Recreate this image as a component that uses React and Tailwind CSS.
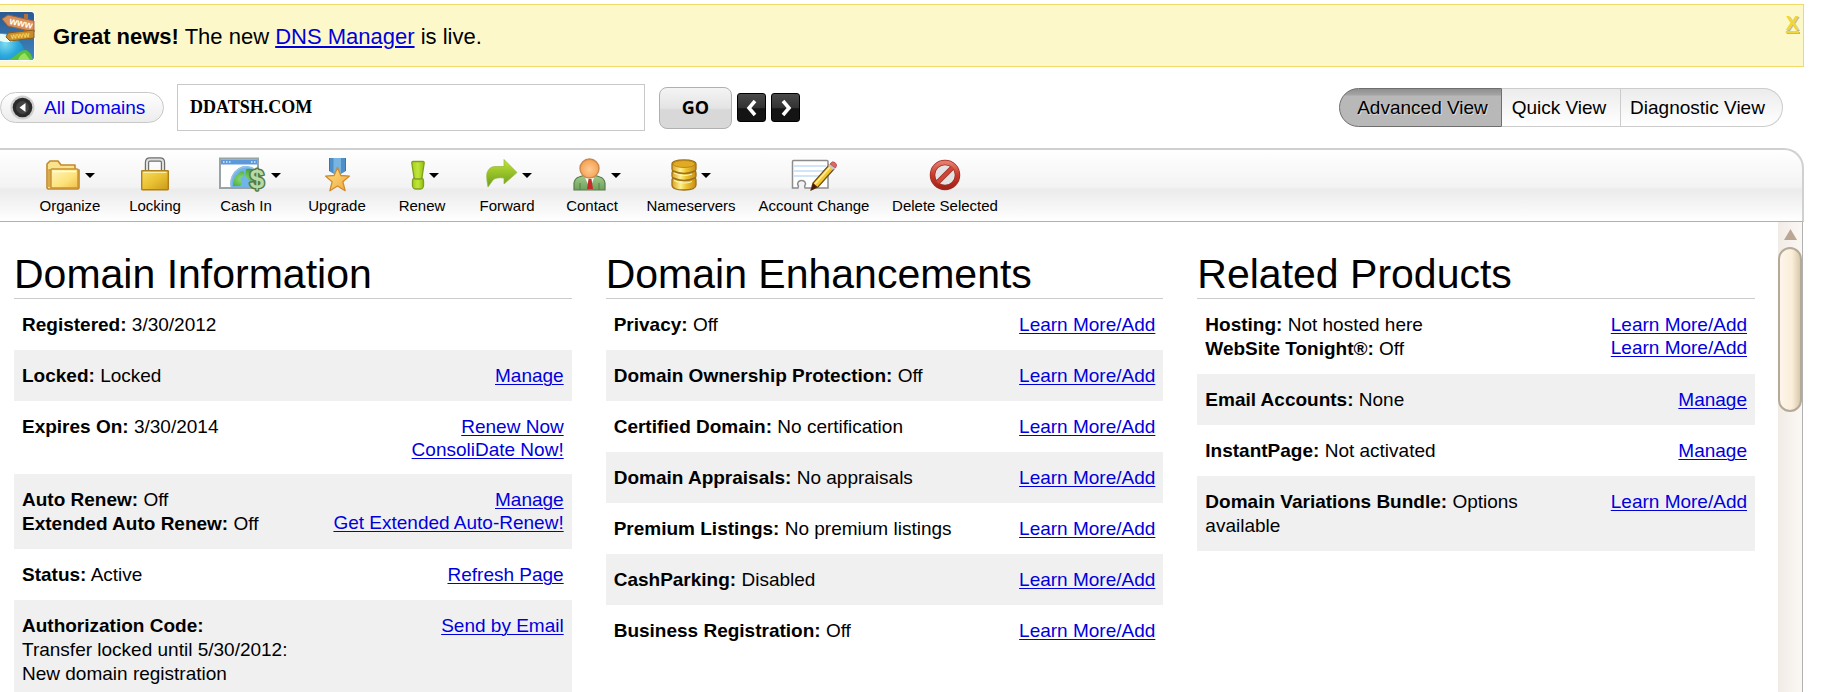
import React from "react";

const LINK = "text-[#0000dd] underline decoration-1 underline-offset-2";

function SignpostIcon() {
  return (
    <svg className="h-[50px] w-[35px] shrink-0" viewBox="0 0 35 50" aria-hidden="true">
      <defs>
        <linearGradient id="sky" x1="0" y1="0" x2="0" y2="1">
          <stop offset="0" stopColor="#2a5a93" />
          <stop offset="1" stopColor="#3f86bd" />
        </linearGradient>
        <radialGradient id="sea" cx="0.2" cy="0.4" r="0.9">
          <stop offset="0" stopColor="#7fdcf0" />
          <stop offset="0.5" stopColor="#2ba9dd" />
          <stop offset="1" stopColor="#1b7fc4" />
        </radialGradient>
        <clipPath id="tile">
          <path d="M-4 0H31q4 0 4 4V46q0 4-4 4H-4z" />
        </clipPath>
      </defs>
      <g clipPath="url(#tile)">
        <rect width="35" height="50" fill="#fff" />
        <path d="M0 1H31q3 0 3 3V46q0 3-3 3H0z" fill="url(#sky)" />
        <path d="M0 22q14 0 22 12 5 8 5 15H0z" fill="url(#sea)" />
        <path d="M0 23q9-1 16 6-7 4-16 1z" fill="#e6fbf3" />
        <path d="M7 49q5-1 9-5 5-5 10-5 5 2 7 10z" fill="#57bf3c" />
        <path d="M18 49q2-6 7-7l5 7z" fill="#9be05a" />
        <path d="M24 3h4v25h-4z" fill="#b06f3c" />
        <path d="M2 8L8 4 34 10V21L8 15z" fill="#d9925d" stroke="#a8643a" strokeWidth="1" />
        <path d="M34 19L8 22 6 26l4 4 24-3z" fill="#c98c2b" stroke="#8a5a1c" strokeWidth="1" />
        <text x="9" y="13" transform="rotate(12 9 13)" fontSize="10" fontWeight="700" fontFamily="Liberation Sans, sans-serif" fill="#fff">www</text>
        <text x="11" y="28" transform="rotate(-6 11 28)" fontSize="8" fontWeight="700" fontFamily="Liberation Sans, sans-serif" fill="#f0d660">www</text>
      </g>
    </svg>
  );
}

function FolderIcon() {
  return (
    <svg className="h-9 w-9" viewBox="0 0 36 36">
      <defs>
        <linearGradient id="folder" x1="0" y1="0" x2="1" y2="1">
          <stop offset="0" stopColor="#fff6bd" />
          <stop offset="0.6" stopColor="#fde27a" />
          <stop offset="1" stopColor="#f0bd4a" />
        </linearGradient>
      </defs>
      <path d="M2 31V7l3-3h8l3 4h14v5h4v18l-1 1H3z" fill="#fbe28c" stroke="#c08a2e" strokeWidth="1.6" strokeLinejoin="round" />
      <path d="M4 30V13h28" fill="none" stroke="#c9952f" strokeWidth="1.4" />
      <path d="M5 31V13H8L6 31z" fill="#e5b04a" />
      <rect x="6" y="12" width="27" height="19" rx="1" fill="url(#folder)" stroke="#c9902f" strokeWidth="1.4" />
      <path d="M8 14.5h23" stroke="#fffbe0" strokeWidth="1.4" />
    </svg>
  );
}

function LockIcon() {
  return (
    <svg className="h-9 w-[30px]" viewBox="0 0 30 36">
      <defs>
        <linearGradient id="lock" x1="0" y1="0" x2="1" y2="1">
          <stop offset="0" stopColor="#f6dc62" />
          <stop offset="0.5" stopColor="#eac233" />
          <stop offset="1" stopColor="#c99a1c" />
        </linearGradient>
      </defs>
      <path d="M7 15V5.500q0-3 3-3H20q3 0 3 3V15" fill="none" stroke="#6e6e6e" strokeWidth="4.400" />
      <path d="M7 15V5.500q0-3 3-3H20q3 0 3 3V15" fill="none" stroke="#dedede" strokeWidth="2" />
      <rect x="1.700" y="13.700" width="26.600" height="19" rx="0.600" fill="url(#lock)" stroke="#b07f1a" strokeWidth="1.400" />
      <path d="M3.500 15.400h23" stroke="#fbf0a4" strokeWidth="1.200" />
    </svg>
  );
}

function CashIcon() {
  return (
    <svg className="h-9 w-14" viewBox="-8 0 56 36">
      <defs>
        <radialGradient id="globe" cx="0.4" cy="0.6" r="0.7">
          <stop offset="0" stopColor="#8fe06a" />
          <stop offset="1" stopColor="#3c9a36" />
        </radialGradient>
      </defs>
      <rect x="1" y="1.500" width="38" height="29.500" fill="#fff" stroke="#98a4a6" strokeWidth="2" />
      <rect x="2" y="2.500" width="36" height="5" fill="#5b98dc" />
      <path d="M4 5h1.500M7 5h1.500M10 5h1.500M32 5h1.500M35 5h1.500" stroke="#dcecff" strokeWidth="1.500" />
      <path d="M12 30a15.500 17 0 0 1 26-16V30z" fill="#6fb4ea" />
      <path d="M14 29q0-8 5-12 2-3 5-3l2 3-5 5 2 4-2 3zM27 12q6-1 10 2v7l-6 3-5-5z" fill="url(#globe)" />
      <path d="M12 29.500a15.500 17 0 0 1 25-16" fill="none" stroke="#9bbfe0" strokeWidth="1.500" />
      <text x="38" y="31" textAnchor="middle" fontFamily="Liberation Sans, sans-serif" fontSize="26" fontWeight="700" fill="#b9dba0" stroke="#56794a" strokeWidth="3" paintOrder="stroke" strokeLinejoin="round">$</text>
    </svg>
  );
}

function MedalIcon() {
  return (
    <svg className="h-9 w-[28px]" viewBox="0 0 28 36">
      <defs>
        <linearGradient id="star" x1="0" y1="0" x2="1" y2="1">
          <stop offset="0" stopColor="#fde58a" />
          <stop offset="1" stopColor="#f0a63a" />
        </linearGradient>
      </defs>
      <path d="M6 1H23V14l-8.500 5L6 14z" fill="#4e8fc8" />
      <path d="M10.500 1h7.500v16h-7.500z" fill="#78b4e2" />
      <path d="M6.500 1V14M22.500 1V14" stroke="#3c74a8" />
      <path d="M14.500 10.500l3.400 8 8.600.6-6.600 5.700 2.200 8.900-7.600-4.700L6.900 33.700l2.200-8.900-6.600-5.700 8.600-.6z" fill="url(#star)" stroke="#cf8a2c" strokeWidth="1.300" strokeLinejoin="round" />
    </svg>
  );
}

function ExclaimIcon() {
  return (
    <svg className="h-9 w-[20px]" viewBox="-6 0 20 36">
      <defs>
        <linearGradient id="excl" x1="0" y1="0" x2="1" y2="0">
          <stop offset="0" stopColor="#a5cf1c" />
          <stop offset="0.5" stopColor="#c0e63a" />
          <stop offset="1" stopColor="#8fbd10" />
        </linearGradient>
      </defs>
      <rect x="1.500" y="20.500" width="11" height="11.500" rx="3.500" fill="url(#excl)" stroke="#7f9f1c" strokeWidth="1.300" />
      <path d="M2 4.500h10q1.300 0 1.200 1.500L11 20.500q-.3 1.500-1.500 1.500h-5Q3.300 22 3 20.500L.8 6Q.7 4.500 2 4.500z" fill="url(#excl)" stroke="#7f9f1c" strokeWidth="1.300" />
    </svg>
  );
}

function ForwardIcon() {
  return (
    <svg className="h-9 w-9" viewBox="-4 0 36 36">
      <defs>
        <linearGradient id="fwd" x1="0" y1="0" x2="0" y2="1">
          <stop offset="0" stopColor="#c0e436" />
          <stop offset="1" stopColor="#6c9d1c" />
        </linearGradient>
      </defs>
      <path d="M18 2.500L31 15.500 18 27v-6q-8-1-11 2l-5 7Q0 20 1 16q2-6.500 8-6.500h9z" fill="url(#fwd)" stroke="#92b83c" strokeWidth="0.700" />
    </svg>
  );
}

function ContactIcon() {
  return (
    <svg className="h-9 w-[44px]" viewBox="-10 0 44 36">
      <defs>
        <radialGradient id="face" cx="0.5" cy="0.55" r="0.6">
          <stop offset="0" stopColor="#ffcb94" />
          <stop offset="1" stopColor="#f39a48" />
        </radialGradient>
        <linearGradient id="suit" x1="0" y1="0" x2="0" y2="1">
          <stop offset="0" stopColor="#a4cb8c" />
          <stop offset="1" stopColor="#6fa05c" />
        </linearGradient>
      </defs>
      <path d="M1 33V26q1-5 5-6l6-2h9l6 2q4 1 5 6v7z" fill="url(#suit)" stroke="#587d49" strokeWidth="1.200" />
      <path d="M11 18l6 14 5-14z" fill="#fff" />
      <path d="M15.500 22h3l1.500 10h-6z" fill="#c62c2c" />
      <path d="M7 26v7M26 26v7" stroke="#587d49" />
      <circle cx="16.500" cy="11.500" r="9.500" fill="url(#face)" stroke="#c88850" strokeWidth="1.400" />
    </svg>
  );
}

function DatabaseIcon() {
  return (
    <svg className="h-9 w-[26px]" viewBox="0 0 26 36">
      <defs>
        <linearGradient id="db" x1="0" y1="0" x2="1" y2="0">
          <stop offset="0" stopColor="#dca21a" />
          <stop offset="0.35" stopColor="#fdf08e" />
          <stop offset="0.6" stopColor="#ecc233" />
          <stop offset="1" stopColor="#c98f12" />
        </linearGradient>
      </defs>
      <path d="M1 7q0-4 12-4t12 4v5q0 1-1 2 1 .8 1 2v3q0 1-1 2 1 .8 1 2v5q0 5-12 5T1 28v-5q0-1.200 1-2-1-1-1-2v-3q0-1.200 1-2-1-1-1-2z" fill="url(#db)" stroke="#9c701c" strokeWidth="1.300" />
      <ellipse cx="13" cy="7" rx="11" ry="3.500" fill="#e2aa20" stroke="#b07d18" strokeWidth="0.800" />
      <path d="M2 14q11 5 22 0M2 21q11 5 22 0" fill="none" stroke="#9c701c" strokeWidth="1.600" />
      <path d="M3 16q10 4.500 18 1M3 23.500q10 4.500 18 1" fill="none" stroke="#fff7b8" strokeWidth="1" />
    </svg>
  );
}

function AccountIcon() {
  return (
    <svg className="h-9 w-[46px]" viewBox="0 0 46 36">
      <path d="M1.500 4.500q0-1 1-1H36q1 0 1 1V31H14q-1-2 .6-4-.6-3.500-4-3.500t-4 3.500q1.400 2 .4 4H1.500z" fill="#fff" stroke="#8d8d8d" strokeWidth="1.500" />
      <path d="M3 9h32M3 14h32M3 19h28" stroke="#c3dcf5" strokeWidth="1.400" />
      <path d="M20 33l2-7L38 8l5 4-16 18z" fill="#f2c62c" stroke="#6d4a14" strokeWidth="1.200" />
      <path d="M24 27L39.500 9.500" stroke="#fdf0a0" strokeWidth="1.500" />
      <path d="M20 33.500l2-7.500 4.500 4z" fill="#4a1c10" />
      <path d="M37 9l2.500-3 5 4L42 13z" fill="#c9c9c9" />
      <path d="M39 7q2-3.500 5-1.500t.5 5.500z" fill="#dc6868" stroke="#b54c4c" strokeWidth="0.800" />
    </svg>
  );
}

function ForbiddenIcon() {
  return (
    <svg className="h-9 w-8" viewBox="0 0 32 36">
      <defs>
        <linearGradient id="ban" x1="0" y1="0" x2="0" y2="1">
          <stop offset="0" stopColor="#e57a6c" />
          <stop offset="0.5" stopColor="#c93a2c" />
          <stop offset="1" stopColor="#a32418" />
        </linearGradient>
      </defs>
      <circle cx="16" cy="18" r="12" fill="#e3e3e3" />
      <path d="M8 26L24 10" stroke="#9c2f25" strokeWidth="5" />
      <circle cx="16" cy="18" r="12.500" fill="none" stroke="#9c2f25" strokeWidth="5.500" />
      <circle cx="16" cy="18" r="12.500" fill="none" stroke="url(#ban)" strokeWidth="4" />
      <path d="M8.500 25.500l15-15" stroke="#cf4537" strokeWidth="3.500" />
    </svg>
  );
}

const TOOLS = [
  { label: "Organize", Icon: FolderIcon, menu: true, width: "w-[60px]" },
  { label: "Locking", Icon: LockIcon, width: "w-[60px]" },
  { label: "Cash In", Icon: CashIcon, menu: true, width: "w-[72px]" },
  { label: "Upgrade", Icon: MedalIcon, width: "w-[60px]" },
  { label: "Renew", Icon: ExclaimIcon, menu: true, width: "w-[60px]" },
  { label: "Forward", Icon: ForwardIcon, menu: true, width: "w-[60px]" },
  { label: "Contact", Icon: ContactIcon, menu: true, width: "w-[60px]" },
  { label: "Nameservers", Icon: DatabaseIcon, menu: true, width: "w-[88px]" },
  { label: "Account Change", Icon: AccountIcon, width: "w-[108px]" },
  { label: "Delete Selected", Icon: ForbiddenIcon, width: "w-[104px]" },
];

const COLUMNS = [
  {
    title: "Domain Information",
    rows: [
      { facts: [["Registered:", "3/30/2012"]], links: [] },
      { facts: [["Locked:", "Locked"]], links: ["Manage"] },
      { facts: [["Expires On:", "3/30/2014"]], links: ["Renew Now", "ConsoliDate Now!"] },
      { facts: [["Auto Renew:", "Off"], ["Extended Auto Renew:", "Off"]], links: ["Manage", "Get Extended Auto-Renew!"] },
      { facts: [["Status:", "Active"]], links: ["Refresh Page"] },
      {
        facts: [["Authorization Code:", ""], ["", "Transfer locked until 5/30/2012:"], ["", "New domain registration"]],
        links: ["Send by Email"],
      },
    ],
  },
  {
    title: "Domain Enhancements",
    rows: [
      { facts: [["Privacy:", "Off"]], links: ["Learn More/Add"] },
      { facts: [["Domain Ownership Protection:", "Off"]], links: ["Learn More/Add"] },
      { facts: [["Certified Domain:", "No certification"]], links: ["Learn More/Add"] },
      { facts: [["Domain Appraisals:", "No appraisals"]], links: ["Learn More/Add"] },
      { facts: [["Premium Listings:", "No premium listings"]], links: ["Learn More/Add"] },
      { facts: [["CashParking:", "Disabled"]], links: ["Learn More/Add"] },
      { facts: [["Business Registration:", "Off"]], links: ["Learn More/Add"] },
    ],
  },
  {
    title: "Related Products",
    rows: [
      {
        facts: [["Hosting:", "Not hosted here"], ["WebSite Tonight®:", "Off"]],
        links: ["Learn More/Add", "Learn More/Add"],
      },
      { facts: [["Email Accounts:", "None"]], links: ["Manage"] },
      { facts: [["InstantPage:", "Not activated"]], links: ["Manage"] },
      { facts: [["Domain Variations Bundle:", "Options available"]], links: ["Learn More/Add"] },
    ],
  },
];

function Banner() {
  return (
    <div className="mt-1 mr-[19px] flex h-[63px] shrink-0 items-center border border-l-0 border-[#f0da6a] bg-[#fdf8ca]">
      <SignpostIcon />
      <p className="ml-[18px] flex-1 pt-[2px] text-[22px] leading-7">
        <b>Great news!</b> The new{" "}
        <a href="#dns" className="text-[#0000dd] underline decoration-2 underline-offset-2">
          DNS Manager
        </a>{" "}
        is live.
      </p>
      <button type="button" aria-label="Close" className="mt-[6px] mr-1 self-start text-[20px] leading-6 font-bold text-[#f0d53c] underline decoration-2 [text-shadow:1px_1px_0_#bdb78a]">
        X
      </button>
    </div>
  );
}

function StepButton({ label, points }) {
  return (
    <button type="button" aria-label={label} className="flex h-[29px] w-[29px] items-center justify-center rounded-[3px] border border-black bg-linear-to-b from-[#4a4a4a] from-0% via-[#333333] via-50% to-[#141414] to-55%">
      <svg className="h-5 w-5" viewBox="0 0 20 20">
        <polyline points={points} fill="none" stroke="#fff" strokeWidth="3.500" />
      </svg>
    </button>
  );
}

function SearchBar() {
  return (
    <div className="mt-[17px] mr-[40px] flex h-[47px] shrink-0 items-center">
      <a href="#domains" className="flex h-[31px] w-[164px] items-center rounded-full border border-[#c8c8c8] bg-linear-to-b from-white to-[#ececec] pl-[9px] text-[19px] text-[#0000ee]">
        <svg className="mr-[9px] h-[25px] w-[25px]" viewBox="0 0 25 25" aria-hidden="true">
          <circle cx="12.500" cy="12.500" r="12" fill="#cfcfcf" />
          <circle cx="12.500" cy="12.500" r="9.800" fill="#2b2b2b" />
          <circle cx="12.500" cy="12.500" r="6.500" fill="#444" />
          <path d="M15.500 8v9L9.500 12.500z" fill="#fff" />
        </svg>
        <span className="pt-[2px]">All Domains</span>
      </a>
      <input
        type="text"
        aria-label="Domain name"
        defaultValue="DDATSH.COM"
        className="ml-[13px] h-[47px] w-[468px] border border-[#c8c8c8] bg-white px-3 font-['Liberation_Serif',serif] text-[18px] font-bold text-black outline-none"
      />
      <button type="button" className="ml-[14px] h-[42px] w-[73px] rounded-[8px] border border-[#b0b0b0] bg-linear-to-b from-[#f4f4f4] from-0% via-[#e4e4e4] via-50% to-[#d8d8d8] to-55% font-['Open_Sans',sans-serif] text-[18px] font-bold">
        GO
      </button>
      <div className="ml-[5px] flex gap-[5px]">
        <StepButton label="Previous domain" points="13,3 7,10 13,17" />
        <StepButton label="Next domain" points="7,3 13,10 7,17" />
      </div>
      <div className="ml-auto flex h-[39px] text-[19px]">
        <button type="button" aria-pressed="true" className="w-[163px] rounded-l-full border border-[#6e6e6e] bg-linear-to-b from-[#8f8f8f] from-0% via-[#a3a3a3] via-15% to-[#b8b8b8] to-20% pt-[2px] pl-1 [text-shadow:1px_1px_0_#d8d8d8]">
          Advanced View
        </button>
        <button type="button" className="w-[119px] border-y border-r border-[#cccccc] bg-linear-to-b from-[#ececec] to-white pt-[2px] pr-1">
          Quick View
        </button>
        <button type="button" className="w-[162px] rounded-r-full border-y border-r border-[#cccccc] bg-linear-to-b from-[#ececec] to-white pt-[2px] pr-2">
          Diagnostic View
        </button>
      </div>
    </div>
  );
}

function Toolbar() {
  return (
    <div className="mt-[17px] mr-[19px] flex h-[74px] shrink-0 gap-[25px] rounded-tr-[20px] border-t-2 border-r-2 border-b border-[#d0d0d0] border-b-[#b0b0b0] bg-[linear-gradient(to_bottom,#ffffff_0%,#f3f3f3_52%,#ebebeb_56%,#ffffff_100%)] pl-10">
      {TOOLS.map(({ label, Icon, menu, width }) => (
        <button key={label} type="button" className={"flex shrink-0 flex-col items-center " + width}>
          <span className="mt-[7px] flex h-9 items-center gap-1">
            <Icon />
            {menu && (
              <svg className="h-[5px] w-[10px]" viewBox="0 0 10 5" aria-hidden="true">
                <path d="M0 0h10L5 5z" fill="#000" />
              </svg>
            )}
          </span>
          <span className="mt-[3px] text-[15px] leading-5 whitespace-nowrap">{label}</span>
        </button>
      ))}
    </div>
  );
}

function Column({ title, rows }) {
  return (
    <section className="min-w-0 flex-1">
      <h2 className="border-b border-[#cccccc] pb-[1px] text-[41px] leading-[46px] whitespace-nowrap">{title}</h2>
      {rows.map((row, i) => (
        <div key={i} className="flex justify-between gap-12 px-2 pt-[14px] pb-[13px] text-[19px] leading-6 odd:bg-[#f0f0f0]">
          <div>
            {row.facts.map(([name, value], j) => (
              <p key={j}>
                {name && <b>{name}</b>} {value}
              </p>
            ))}
          </div>
          <div className="flex shrink-0 flex-col items-end leading-[23px]">
            {row.links.map((link, j) => (
              <a key={j} href="#manage" className={LINK}>
                {link}
              </a>
            ))}
          </div>
        </div>
      ))}
    </section>
  );
}

function Scrollbar() {
  return (
    <div className="w-6 shrink-0 bg-linear-to-r from-[#f1ebe6] to-[#fbf8f4] pt-[7px]" aria-hidden="true">
      <svg className="mx-auto h-[11px] w-[13px]" viewBox="0 0 13 11">
        <path d="M6.500 0L13 11H0z" fill="#b9a794" />
      </svg>
      <div className="mt-[7px] h-[165px] w-6 rounded-full border-2 border-[#b5aa98] bg-linear-to-r from-[#fdf6ec] from-0% via-[#fbeed9] via-60% to-[#d8c8ae] to-100%" />
    </div>
  );
}

export default function App() {
  return (
    <div className="flex h-screen flex-col overflow-hidden bg-white font-['Liberation_Sans',Arial,sans-serif] text-black">
      <Banner />
      <SearchBar />
      <Toolbar />
      <main className="mr-5 flex min-h-0 flex-1 border-r border-[#b0b0b0]">
        <div className="flex flex-1 gap-[34px] pt-[29px] pr-[23px] pl-[14px]">
          {COLUMNS.map((column) => (
            <Column key={column.title} {...column} />
          ))}
        </div>
        <Scrollbar />
      </main>
    </div>
  );
}
